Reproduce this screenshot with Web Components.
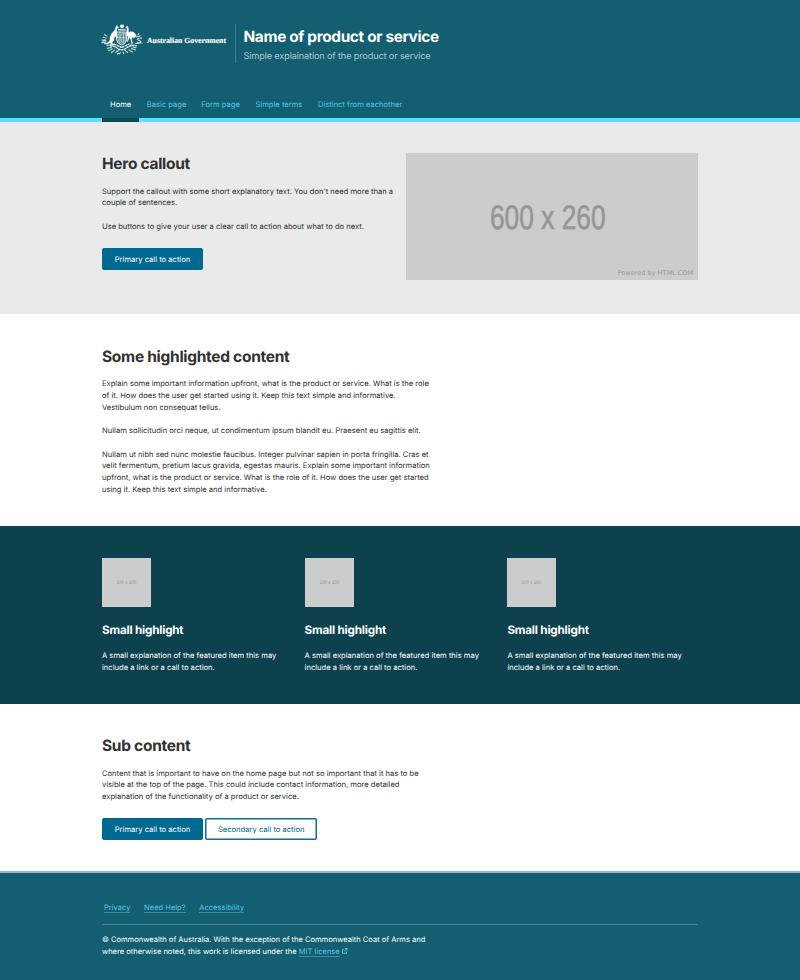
<!DOCTYPE html>
<html lang="en">
<head>
<meta charset="utf-8">
<title>Name of product or service</title>
<style>
body{margin:0;background:#fff;color:#313131;font:7.6px/11.79px Inter,"Liberation Sans",sans-serif;text-rendering:geometricPrecision;width:800px;overflow-x:hidden}
</style>
</head>
<body>
<gov-page></gov-page>
<script>
const define = (name, html) => {
  const t = document.createElement('template');
  t.innerHTML = html;
  customElements.define(name, class extends HTMLElement {
    constructor() {
      super();
      this.attachShadow({mode: 'open'}).appendChild(t.content.cloneNode(true));
    }
  });
};

define('gov-crest', `<style>:host{display:block;width:42px;height:31px}svg{display:block}</style>
<svg width="42" height="31" viewBox="0 0 42 31" fill="none" stroke="#fff" stroke-linecap="round" stroke-linejoin="round">
<path fill="#fff" stroke="none" d="M21 0l.7 1.1 1.3-.3-.4 1.2.9.9-1.2.4-.2 1.2-1.1-.7-1.1.7-.2-1.2-1.2-.4.9-.9-.4-1.2 1.3.3z"/>
<path stroke-width="1.1" stroke-dasharray="1.3 .5" d="M17.500 5.900h7"/>
<path fill="#fff" stroke="#fff" stroke-width=".3" d="M15.300 2.200l.7-.9.6 1.100 1 1-.2.700-1.500.2-.3 3.500.3 3.600 1 1.800-1.300.3-2-1.400-.7 4.100-1.800 2.600 1.500 1.900-1.500.4-2.300-2-2.200.8-3.300.1 3.600-1.400 1.800-2 .4-3.600 1.800-4 2.500-2.300z"/>
<path fill="#fff" stroke="#fff" stroke-width=".2" d="M24.600 3.300l1.300-1.100 1 .4.600 1.800.1 4.100 2.200-1 2.600.5 2.300 2.300 1 3.100-1.700-.8-.6 1.700-1.600-1-1.100 1.200.3 3.300 1.500 1.500-2 .1-.8-4-1.500-1.700-1.400 4-.7-.4.900-4.300-1.600-2.500.5-6.400z"/>
<path stroke-width=".8" fill="#fff" fill-opacity=".3" d="M15.600 8h10v8.200q-.5 3.300-5 5-4.500-1.700-5-5z"/>
<path stroke-width=".6" opacity=".8" d="M18.900 8.300v10.900M22.400 8.300v10.900M15.800 13.700h9.700M16.500 10.100l1.200 1.300M19.800 11.600l1.400-1.800M23.500 10h1.200v2M17.300 15.600v1.600M20.700 15.200v2.800M24 15.600v1.500"/>
<path stroke-width="1.200" opacity=".75" stroke-dasharray="1.300 1.200" d="M7 19.700Q1.700 19.500 2 16.600l3-1.200M.9 18.700l4.700-1.100M2.300 13.200l2.900.9M3.800 10.700l2.300 1.500M1.200 16l3.900.5M34.500 19.500q5 .1 5.300-2.400l-3.500-1.500M35.800 12.500l3.300-.6M36.800 14.300l4-.2M36 18.500l5 .4M37 10.500l1.600-1.400M6 21.500l6.300-.9M29.500 20.800l6.300 1"/>
<path stroke-width="1.300" stroke-dasharray="1.500 1.500" d="M9.500 21.600l4 .8 4.200 2.800 3 .7 3-.8 4-2.700 4.300-.9M13.500 20.200l3.700 1.600 3.500 1.800 3.500-1.800 4-1.700"/>
<path stroke-width="1.200" opacity=".8" stroke-dasharray="1.400 1.200" d="M6.500 24.300l3.700-1M7.700 26.700l4-2.200M10.500 28.500l3.300-2.700M14.800 28.400l2.500-2M18.600 29.700l1.200-2.300M22.800 29.700l-1-2.300M26.700 28.500l-2.800-2.200M31.300 28l-4-2.600M34.300 25.900l-4.300-1.700M34.900 23.600l-3-.6M16.500 30l2-1.200"/>
</svg>`);

define('gov-nav', `<style>
:host{display:block;height:32px;border-bottom:4px solid #61daff}
nav{display:flex;height:36px;width:597px;margin-left:102px;color:#50c5ea}
a{padding:13px 8px 0;line-height:12px;white-space:nowrap;box-sizing:border-box;height:36px}
.on{color:#fff;border-bottom:4px solid #0c4a59}
</style><nav><a class="on" style="width:36.800px">Home</a><a style="width:54.500px">Basic page</a><a style="width:54.200px">Form page</a><a style="width:62.500px">Simple terms</a><a>Distinct from eachother</a></nav>`);

define('gov-header', `<style>
:host{display:block;height:122px;background:#135e70;color:#fff;box-sizing:border-box;padding-top:24px}
.brand{display:flex;margin-left:101px;height:38.500px}
.gov{font:bold 7.750px/12px "Liberation Serif",serif;padding-top:10.500px;margin-left:4px;width:88px;white-space:nowrap;-webkit-text-stroke:.15px #fff}
.t{border-left:1px solid #427e8c;padding-left:7.500px;white-space:nowrap}
h1{margin:3px 0 0;font-size:15.400px;line-height:20px;font-weight:650;letter-spacing:-.36px}
.s{font-size:9.200px;line-height:14px;margin-top:3px;color:#a9c7ce;letter-spacing:-.16px}
gov-nav{margin-top:23.500px}
</style><div class="brand"><gov-crest></gov-crest><div class="gov">Australian Government</div><div class="t"><h1>Name of product or service</h1><div class="s">Simple explaination of the product or service</div></div></div><gov-nav></gov-nav>`);

define('gov-button', `<style>
:host{display:inline-flex;width:101px;height:22px;box-sizing:border-box;padding-top:1.800px;border-radius:2px;background:#00698f;color:#fff;align-items:center;justify-content:center;white-space:nowrap}
:host([secondary]){background:#fff;color:#00698f;width:112px;box-shadow:inset 0 0 0 1.500px #0b7196}
</style><slot></slot>`);

define('gov-band', `<style>
:host{display:block;box-sizing:border-box;padding:31.400px 102px 0}
</style><slot></slot>`);

define('gov-placeholder', `<style>
:host{display:flex;position:relative;background:#ccc;color:#969696;align-items:center;justify-content:center;font-family:"Liberation Sans",sans-serif;white-space:nowrap}
small{position:absolute;right:5px;bottom:1px;font:6.500px/12px "DejaVu Sans",sans-serif;color:#9a9a9a}
span{display:block;transform:scaleX(var(--sx,1));padding-top:3px}
:host([credit]) span{-webkit-text-stroke:.6px #969696;padding:4px 10px 0 0}
:host(:not([credit])) small{display:none}
</style><span><slot></slot></span><small>Powered by HTML.COM</small>`);

define('gov-highlight', `<style>
:host{display:block;color:#fff}
gov-placeholder{width:49px;height:49px;font-size:5.200px;--sx:.86}
h3{font-size:11.700px;line-height:16px;font-weight:650;margin:15px 0 12.200px;letter-spacing:-.21px}
p{margin:0;white-space:nowrap}
</style><gov-placeholder>100 x 100</gov-placeholder><h3>Small highlight</h3><p>A small explanation of the featured item this may<br>include a link or a call to action.</p>`);

define('gov-footer', `<style>
:host{display:block;background:#135e70;border-top:2px solid #94b9be;height:109px;box-sizing:border-box;padding:28px 102px 0;color:#fff;font-size:7.540px}
nav{display:flex;gap:13.700px;padding-left:2px;height:23px;border-bottom:1px solid #478491}
a{color:#50c5ea;border-bottom:1px solid #348ea8;line-height:9px;height:9px;white-space:nowrap}
nav a{margin-top:2px}
p{margin:8.900px 0 0;white-space:nowrap}
svg{margin-left:2.500px;vertical-align:-.2px}
</style><nav><a>Privacy</a><a>Need Help?</a><a>Accessibility</a></nav>
<p>© Commonwealth of Australia. With the exception of the Commonwealth Coat of Arms and<br>where otherwise noted, this work is licensed under the <a>MIT license</a><svg width="5.500" height="6" viewBox="0 0 11 12" fill="none" stroke="#50c5ea" stroke-width="2"><path d="M4.500 2.500H1v8h8V7M6 1h4v4M10 1L4.500 6.500"/></svg></p>`);

define('gov-page', `<style>
:host{display:block}
h2{font-size:15.500px;line-height:20px;font-weight:650;letter-spacing:-.29px;white-space:nowrap;margin:1.100px 0 11.100px}
p{margin:0 0 11.780px;white-space:nowrap}
.hero{background:#eaeaea;height:192.400px}
.row{display:flex;justify-content:space-between;align-items:flex-start}
.hero gov-placeholder{width:292px;height:126.500px;font-size:34px;--sx:.775}
.high{height:212px}
.cards{background:#0d414d;height:177.600px}
.grid{display:grid;grid-template-columns:202.600px 202.800px auto}
.sub{height:167px}
.btns{display:flex;gap:2.200px;margin-top:15px}
</style>
<gov-header></gov-header>
<gov-band class="hero"><div class="row"><div><h2>Hero callout</h2>
<p>Support the callout with some short explanatory text. You don't need more than a<br>couple of sentences.</p>
<p>Use buttons to give your user a clear call to action about what to do next.</p>
<div class="btns"><gov-button>Primary call to action</gov-button></div></div>
<gov-placeholder credit>600 x 260</gov-placeholder></div></gov-band>
<gov-band class="high"><h2>Some highlighted content</h2>
<p>Explain some important information upfront, what is the product or service. What is the role<br>of it. How does the user get started using it. Keep this text simple and informative.<br>Vestibulum non consequat tellus.</p>
<p>Nullam sollicitudin orci neque, ut condimentum ipsum blandit eu. Praesent eu sagittis elit.</p>
<p>Nullam ut nibh sed nunc molestie faucibus. Integer pulvinar sapien in porta fringilla. Cras et<br>velit fermentum, pretium lacus gravida, egestas mauris. Explain some important information<br>upfront, what is the product or service. What is the role of it. How does the user get started<br>using it. Keep this text simple and informative.</p></gov-band>
<gov-band class="cards"><div class="grid"><gov-highlight></gov-highlight><gov-highlight></gov-highlight><gov-highlight></gov-highlight></div></gov-band>
<gov-band class="sub"><h2>Sub content</h2>
<p>Content that is important to have on the home page but not so important that it has to be<br>visible at the top of the page. This could include contact information, more detailed<br>explanation of the functionality of a product or service.</p>
<div class="btns"><gov-button>Primary call to action</gov-button><gov-button secondary>Secondary call to action</gov-button></div></gov-band>
<gov-footer></gov-footer>`);
</script>
</body>
</html>
